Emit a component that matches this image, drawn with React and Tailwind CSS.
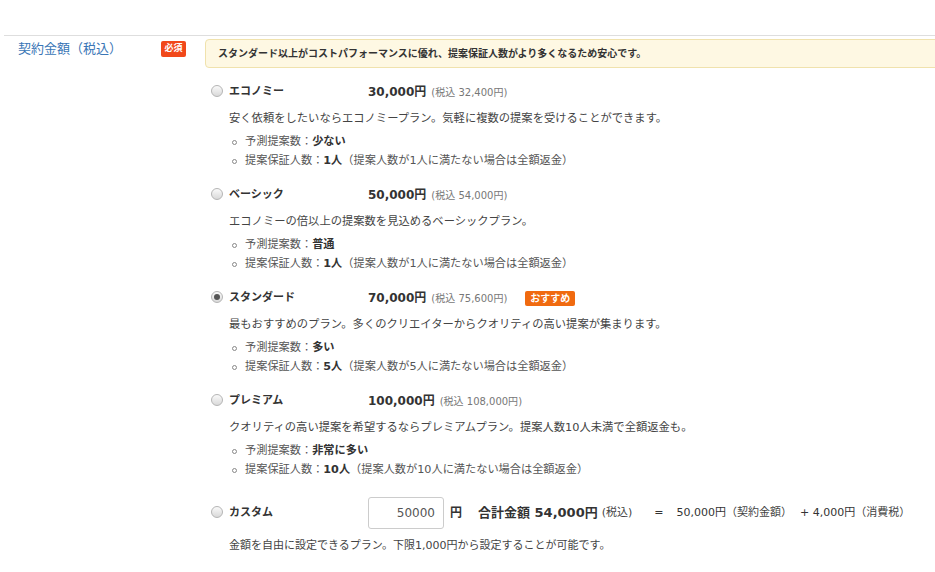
import React, { useState } from 'react';

const FONT = { fontFamily: '"DejaVu Sans", "Noto Sans CJK JP", sans-serif' };

const plans = [
  {
    id: 'economy',
    name: 'エコノミー',
    price: '30,000円',
    tax: '32,400円',
    desc: '安く依頼をしたいならエコノミープラン。気軽に複数の提案を受けることができます。',
    forecast: '少ない',
    guarantee: '1人',
    guaranteeNote: '（提案人数が1人に満たない場合は全額返金）',
  },
  {
    id: 'basic',
    name: 'ベーシック',
    price: '50,000円',
    tax: '54,000円',
    desc: 'エコノミーの倍以上の提案数を見込めるベーシックプラン。',
    forecast: '普通',
    guarantee: '1人',
    guaranteeNote: '（提案人数が1人に満たない場合は全額返金）',
  },
  {
    id: 'standard',
    name: 'スタンダード',
    price: '70,000円',
    tax: '75,600円',
    recommended: true,
    desc: '最もおすすめのプラン。多くのクリエイターからクオリティの高い提案が集まります。',
    forecast: '多い',
    guarantee: '5人',
    guaranteeNote: '（提案人数が5人に満たない場合は全額返金）',
  },
  {
    id: 'premium',
    name: 'プレミアム',
    price: '100,000円',
    tax: '108,000円',
    desc: 'クオリティの高い提案を希望するならプレミアムプラン。提案人数10人未満で全額返金も。',
    forecast: '非常に多い',
    guarantee: '10人',
    guaranteeNote: '（提案人数が10人に満たない場合は全額返金）',
  },
];

const Radio = ({ checked }) => (
  <span className="w-[12px] h-[12px] -mt-[2px] rounded-full border border-[#b5b5b5] bg-gradient-to-b from-[#fafafa] to-[#d9d9d9] flex items-center justify-center shrink-0">
    {checked && <span className="w-[6px] h-[6px] rounded-full bg-[#555]" />}
  </span>
);

const Bullet = ({ children }) => (
  <li className="h-[19px] flex items-center text-[11.2px] text-[#555]">
    <span className="w-[5px] h-[5px] rounded-full border border-[#888] ml-[3px] mr-[8px] shrink-0" />
    <span>{children}</span>
  </li>
);

const App = () => {
  const [selected, setSelected] = useState('standard');
  const [custom, setCustom] = useState('50000');

  return (
    <div className="min-h-screen w-full bg-white overflow-hidden text-[#333]" style={FONT}>
      <div className="ml-[4px] mt-[35px] border-t border-[#dedede] flex">
        {/* label */}
        <div className="w-[157px] pl-[14px] pt-[4px] text-[13px] leading-[18px] text-[#3a76b6] shrink-0">
          契約金額（税込）
        </div>
        <div className="w-[44px] pt-[5px] shrink-0 flex items-start">
          <span className="flex items-center justify-center w-[25px] h-[16px] bg-[#f1481a] text-white text-[9px] font-bold rounded-[2px]">
            必須
          </span>
        </div>

        {/* content */}
        <div className="flex-1 min-w-0">
          <div className="mt-[3px] -mr-[20px] h-[29px] flex items-center pl-[12px] bg-[#fef8e3] border border-[#f0e2ad] rounded-l-[4px] text-[10px] font-bold text-[#333]">
            スタンダード以上がコストパフォーマンスに優れ、提案保証人数がより多くなるため安心です。
          </div>

          <div className="pt-[12px] pl-[6px]">
            {plans.map((p) => (
              <div key={p.id} className="mb-[12px]">
                <label className="h-[24px] flex items-center cursor-pointer" onClick={() => setSelected(p.id)}>
                  <Radio checked={selected === p.id} />
                  <span className="w-[145px] pl-[6px] text-[11px] font-bold">{p.name}</span>
                  <span className="text-[12px] font-bold text-[#333]">{p.price}</span>
                  <span className="ml-[5px] text-[10px] text-[#777]">(税込 {p.tax})</span>
                  {p.recommended && (
                    <span className="ml-[18px] inline-flex items-center h-[15px] px-[5px] bg-[#f06a10] text-white text-[10px] font-bold rounded-[2px]">
                      おすすめ
                    </span>
                  )}
                </label>
                <p className="mt-[5px] pl-[18px] h-[20px] flex items-center text-[11.3px] text-[#444]">{p.desc}</p>
                <ul className="mt-[4px] pl-[18px]">
                  <Bullet>
                    予測提案数：<span className="font-bold text-[#333]">{p.forecast}</span>
                  </Bullet>
                  <Bullet>
                    提案保証人数：<span className="font-bold text-[#333]">{p.guarantee}</span>
                    {p.guaranteeNote}
                  </Bullet>
                </ul>
              </div>
            ))}

            {/* custom */}
            <div className="mt-[16px] h-[34px] flex items-center whitespace-nowrap">
              <label className="flex items-center cursor-pointer" onClick={() => setSelected('custom')}>
                <Radio checked={selected === 'custom'} />
                <span className="w-[145px] pl-[6px] text-[11px] font-bold">カスタム</span>
              </label>
              <input
                value={custom}
                onChange={(e) => setCustom(e.target.value)}
                className="w-[76px] h-[32px] border border-[#ccc] rounded-[3px] text-right pr-[8px] text-[12px] text-[#555] outline-none"
                style={FONT}
              />
              <span className="ml-[6px] text-[12px] font-bold">円</span>
              <span className="ml-[16px] text-[13px] font-bold">合計金額 54,000円</span>
              <span className="ml-[4px] text-[11px] text-[#444]">(税込)</span>
              <span className="ml-[22px] text-[11px] text-[#333]">=</span>
              <span className="ml-[13px] text-[11px] text-[#333]">50,000円</span>
              <span className="text-[11px] text-[#444]">（契約金額）</span>
              <span className="ml-[8px] text-[11px] text-[#333]">+ 4,000円</span>
              <span className="text-[11px] text-[#444]">（消費税）</span>
            </div>
            <p className="mt-[6px] pl-[18px] h-[20px] flex items-center text-[11px] text-[#444]">
              金額を自由に設定できるプラン。下限1,000円から設定することが可能です。
            </p>
          </div>
        </div>
      </div>
    </div>
  );
};

export default App;
